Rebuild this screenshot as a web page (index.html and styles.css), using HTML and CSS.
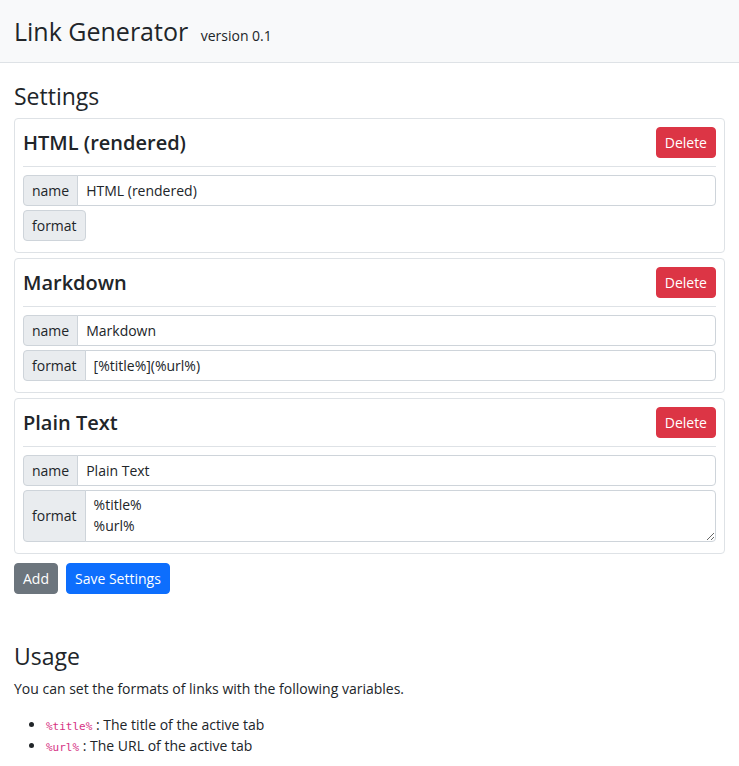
FILE: index.html
```html
<!DOCTYPE html>
<html>
<head>
<meta charset="utf-8">
<link rel="stylesheet" href="styles.css">
</head>
<body>
<header class="topbar">
  <h1 class="brand">Link Generator <small class="version">version 0.1</small></h1>
</header>
<main class="container">
  <h2 class="section-title">Settings</h2>

  <div class="card">
    <div class="card-head">
      <h3 class="card-title">HTML (rendered)</h3>
      <button class="btn btn-danger">Delete</button>
    </div>
    <hr class="divider">
    <div class="input-group">
      <span class="addon">name</span>
      <input class="field" type="text" value="HTML (rendered)">
    </div>
    <div class="input-group">
      <span class="addon">format</span>
    </div>
  </div>

  <div class="card">
    <div class="card-head">
      <h3 class="card-title">Markdown</h3>
      <button class="btn btn-danger">Delete</button>
    </div>
    <hr class="divider">
    <div class="input-group">
      <span class="addon">name</span>
      <input class="field" type="text" value="Markdown">
    </div>
    <div class="input-group">
      <span class="addon">format</span>
      <input class="field" type="text" value="[%title%](%url%)">
    </div>
  </div>

  <div class="card">
    <div class="card-head">
      <h3 class="card-title">Plain Text</h3>
      <button class="btn btn-danger">Delete</button>
    </div>
    <hr class="divider">
    <div class="input-group">
      <span class="addon">name</span>
      <input class="field" type="text" value="Plain Text">
    </div>
    <div class="input-group">
      <span class="addon addon-tall">format</span>
      <textarea class="field area">%title%
%url%</textarea>
    </div>
  </div>

  <div class="actions">
    <button class="btn btn-secondary">Add</button>
    <button class="btn btn-primary">Save Settings</button>
  </div>

  <h2 class="section-title usage">Usage</h2>
  <p class="lead-text">You can set the formats of links with the following variables.</p>
  <ul class="vars">
    <li><code>%title%</code> : The title of the active tab</li>
    <li><code>%url%</code> : The URL of the active tab</li>
  </ul>
</main>
</body>
</html>
```

FILE: styles.css
```css
* { box-sizing: border-box; }
html, body { margin: 0; padding: 0; }
body {
  font-family: "Open Sans", "Noto Sans", sans-serif;
  font-size: 14px;
  line-height: 1.5;
  color: #212529;
  background: #fff;
}
.topbar {
  background: #f8f9fa;
  border-bottom: 1px solid #dee2e6;
  height: 63px;
  padding: 0 14px;
  display: flex;
  align-items: center;
}
.brand {
  margin: 0;
  font-weight: 400;
  font-size: 25px;
  line-height: 1.2;
  padding-bottom: 1px;
}
.version {
  font-size: 14px;
  margin-left: 6px;
}
.container {
  padding: 0 14px;
}
.section-title {
  font-weight: 400;
  font-size: 23px;
  line-height: 1.2;
  margin: 20px 0 7px;
}
.card {
  border: 1px solid #dee2e6;
  border-radius: 4px;
  padding: 8px 8px 11px;
  margin-bottom: 5px;
}
.card-head {
  display: flex;
  justify-content: space-between;
  align-items: center;
}
.card-title {
  margin: 0;
  font-size: 20px;
  font-weight: 600;
  line-height: 1.2;
  padding-top: 2px;
}
.divider {
  border: 0;
  border-top: 1px solid #dee2e6;
  margin: 8px 0;
}
.btn {
  font-family: inherit;
  font-size: 14px;
  line-height: 1.5;
  height: 31px;
  padding: 0 8px;
  border: 1px solid transparent;
  border-radius: 4px;
  color: #fff;
}
.btn-danger { background: #dc3545; border-color: #dc3545; }
.btn-secondary { background: #6c757d; border-color: #6c757d; }
.btn-primary { background: #0d6efd; border-color: #0d6efd; }
.input-group {
  display: flex;
}
.input-group + .input-group { margin-top: 4px; }
.addon {
  display: flex;
  align-items: center;
  height: 31px;
  padding: 0 8px;
  background: #e9ecef;
  border: 1px solid #ced4da;
  border-radius: 4px 0 0 4px;
  color: #212529;
}
.input-group .addon:last-child { border-radius: 4px; }
.addon-tall { height: auto; }
.field {
  flex: 1;
  min-width: 0;
  height: 31px;
  margin-left: -1px;
  padding: 0 8px;
  font-family: inherit;
  font-size: 14px;
  color: #212529;
  border: 1px solid #ced4da;
  border-radius: 0 4px 4px 0;
  background: #fff;
}
.area {
  height: 52px;
  padding: 3px 8px;
  line-height: 1.5;
  resize: vertical;
}
.actions {
  display: flex;
  gap: 8px;
  margin-top: 9px;
}
.usage { margin-top: 49px; margin-bottom: 8px; }
.lead-text { margin: 0 0 15px; }
.vars { margin: 0; padding-left: 32px; }
.vars li { line-height: 21px; }
code {
  font-family: "DejaVu Sans Mono", monospace;
  font-size: 11px;
  line-height: 1;
  color: #d63384;
}
```
